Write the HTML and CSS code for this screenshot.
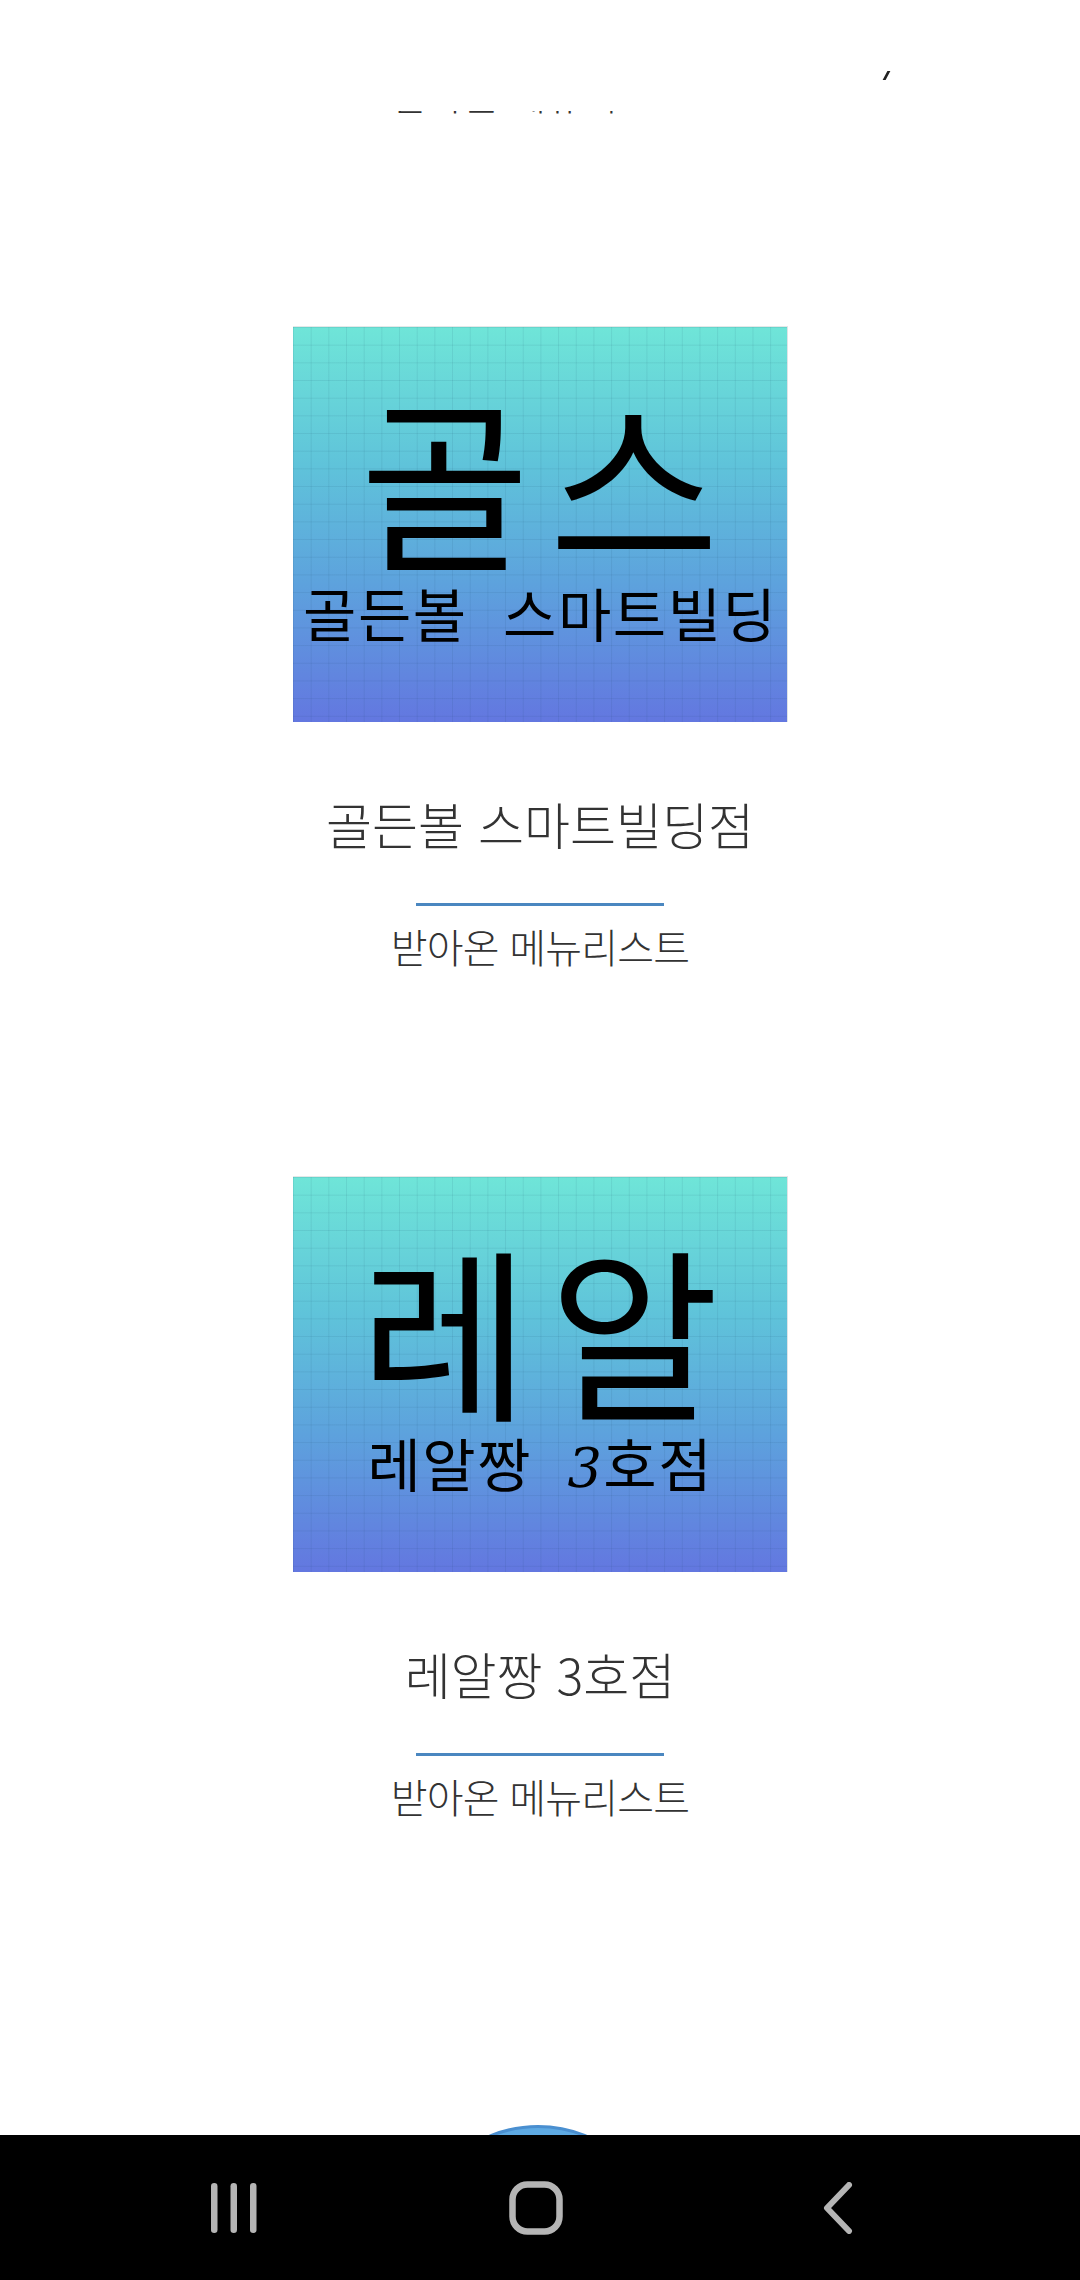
FILE: index.html
```html
<!DOCTYPE html>
<html lang="ko">
<head>
<meta charset="utf-8">
<title>매장 목록</title>
<link rel="stylesheet" href="styles.css">
</head>
<body>
<header class="topbar"><span class="tick"></span></header>

<main class="feed">
  <article class="store-tail">
    <p class="menu-link">받아온 메뉴리스트</p>
  </article>

  <article class="store">
    <div class="thumb">
      <div class="thumb-big">골스</div>
      <div class="thumb-small">골든볼  스마트빌딩</div>
    </div>
    <h2 class="store-name">골든볼 스마트빌딩점</h2>
    <div class="rule"></div>
    <p class="menu-link">받아온 메뉴리스트</p>
  </article>

  <article class="store">
    <div class="thumb">
      <div class="thumb-big">레알</div>
      <div class="thumb-small">레알짱  <span class="script3">3</span>호점</div>
    </div>
    <h2 class="store-name">레알짱 3호점</h2>
    <div class="rule"></div>
    <p class="menu-link">받아온 메뉴리스트</p>
  </article>
</main>

<button class="fab" type="button" aria-label="추가"></button>

<nav class="navbar">
  <div class="nav-cell">
    <svg width="46" height="50" viewBox="0 0 46 50"><g fill="#b5b5b5"><rect x="0" y="0" width="6.5" height="50" rx="3.2"/><rect x="19.5" y="0" width="6.5" height="50" rx="3.2"/><rect x="39" y="0" width="6.5" height="50" rx="3.2"/></g></svg>
  </div>
  <div class="nav-cell">
    <svg width="54" height="54" viewBox="0 0 54 54"><rect x="3.5" y="3.5" width="47" height="47" rx="15" fill="none" stroke="#b5b5b5" stroke-width="6.5"/></svg>
  </div>
  <div class="nav-cell">
    <svg width="32" height="52" viewBox="0 0 32 52"><path d="M27 3 L5 26 L27 49" fill="none" stroke="#b5b5b5" stroke-width="6" stroke-linecap="round" stroke-linejoin="round"/></svg>
  </div>
</nav>
</body>
</html>
```

FILE: styles.css
```css
html, body {
  margin: 0;
  padding: 0;
}
body {
  width: 1080px;
  height: 2280px;
  overflow: hidden;
  background: #ffffff;
  font-family: "Noto Sans CJK KR", "Noto Sans", sans-serif;
  color: #333333;
  position: relative;
}

.topbar {
  position: fixed;
  top: 0;
  left: 0;
  right: 0;
  height: 111px;
  background: #ffffff;
  z-index: 5;
}
.tick {
  position: absolute;
  left: 885px;
  top: 71px;
  width: 3px;
  height: 9px;
  background: #222;
  transform: skewX(-28deg);
}

.feed {
  display: flex;
  flex-direction: column;
}

.store-tail {
  height: 326px;
  box-sizing: border-box;
  padding-top: 68px;
  display: flex;
  flex-direction: column;
  align-items: center;
}

.store {
  height: 850px;
  display: flex;
  flex-direction: column;
  align-items: center;
}

.thumb {
  width: 495px;
  height: 396px;
  box-sizing: border-box;
  border-top: 1px solid #e4e8e8;
  border-right: 1px solid #dfe3e6;
  background-color: #62acdc;
  background-image:
    linear-gradient(to right, rgba(20, 60, 90, 0.09) 1px, transparent 1px),
    linear-gradient(to bottom, rgba(20, 60, 90, 0.09) 1px, transparent 1px),
    linear-gradient(to bottom, #6fe5d8 0%, #5fc3da 35%, #5da2dd 65%, #6377e0 100%);
  background-size: 17.68px 17.68px, 17.68px 17.68px, 100% 100%;
  background-position: 0 0, 0 0, 0 0;
  display: flex;
  flex-direction: column;
  align-items: center;
  color: #000000;
  padding-top: 46px;
}
.thumb-big {
  font-size: 185px;
  line-height: 206px;
  height: 206px;
  font-weight: 400;
  letter-spacing: 19px;
  padding-left: 19px;
  white-space: nowrap;
}
.thumb-small {
  font-size: 58px;
  line-height: 66px;
  letter-spacing: 1.5px;
  padding-left: 1.5px;
  white-space: pre;
}
.script3 {
  font-family: "DejaVu Serif", "Liberation Serif", serif;
  font-style: italic;
  font-size: 54px;
}

.store-name {
  margin: 68px 0 0;
  font-size: 50px;
  line-height: 66px;
  font-weight: 300;
  letter-spacing: 0;
  color: #333333;
}
.rule {
  width: 248px;
  height: 3px;
  background: #4a87c0;
  margin-top: 47px;
}
.menu-link {
  margin: 15px 0 0;
  font-size: 40px;
  line-height: 50px;
  font-weight: 300;
  letter-spacing: -0.8px;
  color: #333333;
}
.store-tail .menu-link {
  margin-top: 0;
}

.fab {
  position: absolute;
  left: 410px;
  top: 2125px;
  width: 256px;
  height: 256px;
  border-radius: 50%;
  border: 3px solid #4a8fd0;
  background: #5eaae3;
  padding: 0;
  z-index: 6;
}

.navbar {
  position: absolute;
  left: 0;
  right: 0;
  bottom: 0;
  height: 145px;
  background: #000000;
  display: grid;
  grid-template-columns: repeat(3, 302px);
  justify-content: center;
  align-items: center;
  padding-right: 9px;
  z-index: 7;
}
.nav-cell {
  display: flex;
  justify-content: center;
  align-items: center;
}
.nav-cell svg {
  display: block;
}
```
